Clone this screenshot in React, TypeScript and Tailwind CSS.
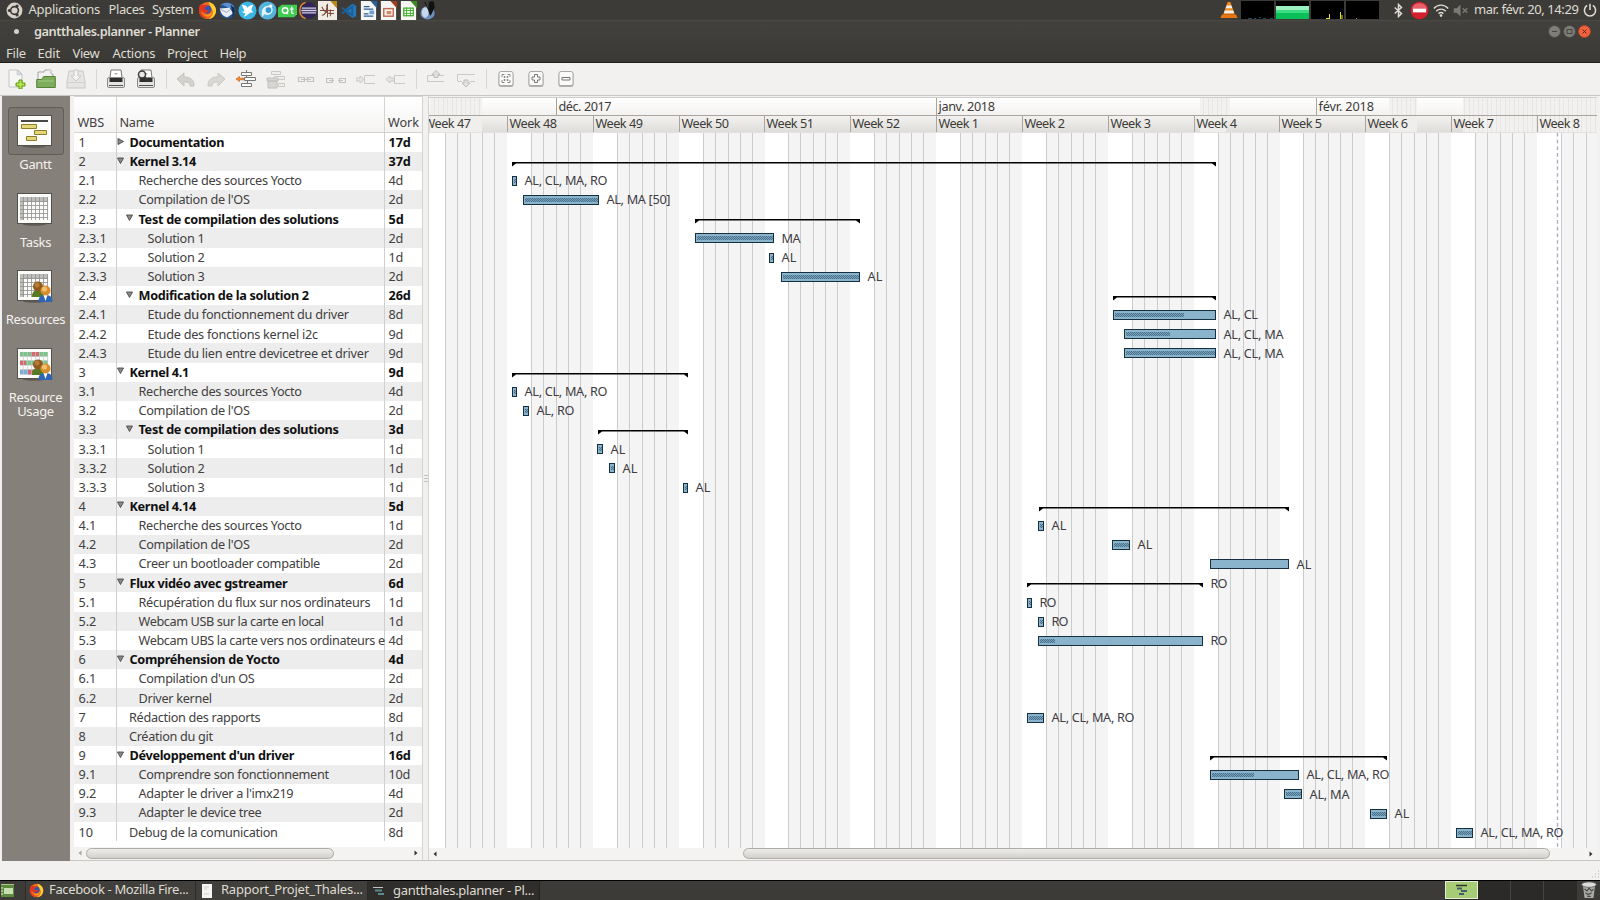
import type { ReactNode } from "react";

type Row = { wbs: string; name: string; work: string; level: number; parent?: "open" | "closed"; tight?: boolean };

const rows: Row[] = [
  { wbs: "1", name: "Documentation", work: "17d", level: 0, parent: "closed" },
  { wbs: "2", name: "Kernel 3.14", work: "37d", level: 0, parent: "open" },
  { wbs: "2.1", name: "Recherche des sources Yocto", work: "4d", level: 1 },
  { wbs: "2.2", name: "Compilation de l'OS", work: "2d", level: 1 },
  { wbs: "2.3", name: "Test de compilation des solutions", work: "5d", level: 1, parent: "open" },
  { wbs: "2.3.1", name: "Solution 1", work: "2d", level: 2 },
  { wbs: "2.3.2", name: "Solution 2", work: "1d", level: 2 },
  { wbs: "2.3.3", name: "Solution 3", work: "2d", level: 2 },
  { wbs: "2.4", name: "Modification de la solution 2", work: "26d", level: 1, parent: "open" },
  { wbs: "2.4.1", name: "Etude du fonctionnement du driver", work: "8d", level: 2 },
  { wbs: "2.4.2", name: "Etude des fonctions kernel i2c", work: "9d", level: 2 },
  { wbs: "2.4.3", name: "Etude du lien entre devicetree et driver", work: "9d", level: 2 },
  { wbs: "3", name: "Kernel 4.1", work: "9d", level: 0, parent: "open" },
  { wbs: "3.1", name: "Recherche des sources Yocto", work: "4d", level: 1 },
  { wbs: "3.2", name: "Compilation de l'OS", work: "2d", level: 1 },
  { wbs: "3.3", name: "Test de compilation des solutions", work: "3d", level: 1, parent: "open" },
  { wbs: "3.3.1", name: "Solution 1", work: "1d", level: 2 },
  { wbs: "3.3.2", name: "Solution 2", work: "1d", level: 2 },
  { wbs: "3.3.3", name: "Solution 3", work: "1d", level: 2 },
  { wbs: "4", name: "Kernel 4.14", work: "5d", level: 0, parent: "open" },
  { wbs: "4.1", name: "Recherche des sources Yocto", work: "1d", level: 1 },
  { wbs: "4.2", name: "Compilation de l'OS", work: "2d", level: 1 },
  { wbs: "4.3", name: "Creer un bootloader compatible", work: "2d", level: 1 },
  { wbs: "5", name: "Flux vidéo avec gstreamer", work: "6d", level: 0, parent: "open" },
  { wbs: "5.1", name: "Récupération du flux sur nos ordinateurs", work: "1d", level: 1 },
  { wbs: "5.2", name: "Webcam USB sur la carte en local", work: "1d", level: 1, tight: true },
  { wbs: "5.3", name: "Webcam UBS la carte vers nos ordinateurs e", work: "4d", level: 1, tight: true },
  { wbs: "6", name: "Compréhension de Yocto", work: "4d", level: 0, parent: "open" },
  { wbs: "6.1", name: "Compilation d'un OS", work: "2d", level: 1 },
  { wbs: "6.2", name: "Driver kernel", work: "2d", level: 1 },
  { wbs: "7", name: "Rédaction des rapports", work: "8d", level: 0 },
  { wbs: "8", name: "Création du git", work: "1d", level: 0 },
  { wbs: "9", name: "Développement d'un driver", work: "16d", level: 0, parent: "open" },
  { wbs: "9.1", name: "Comprendre son fonctionnement", work: "10d", level: 1 },
  { wbs: "9.2", name: "Adapter le driver a l'imx219", work: "4d", level: 1 },
  { wbs: "9.3", name: "Adapter le device tree", work: "2d", level: 1 },
  { wbs: "10", name: "Debug de la comunication", work: "8d", level: 0 },
];

type Bar = { wbs: string; from: number; to: number; done?: number; label?: string; summary?: boolean };

const bars: Bar[] = [
  { wbs: "2", from: 512, to: 1216, summary: true },
  { wbs: "2.1", from: 512, to: 517, label: "AL, CL, MA, RO" },
  { wbs: "2.2", from: 523, to: 599, label: "AL, MA [50]" },
  { wbs: "2.3", from: 695, to: 860, summary: true },
  { wbs: "2.3.1", from: 695, to: 774, label: "MA" },
  { wbs: "2.3.2", from: 769, to: 774, label: "AL" },
  { wbs: "2.3.3", from: 781, to: 860, label: "AL" },
  { wbs: "2.4", from: 1113, to: 1216, summary: true },
  { wbs: "2.4.1", from: 1113, to: 1216, done: 1184, label: "AL, CL" },
  { wbs: "2.4.2", from: 1124, to: 1216, done: 1170, label: "AL, CL, MA" },
  { wbs: "2.4.3", from: 1124, to: 1216, label: "AL, CL, MA" },
  { wbs: "3", from: 512, to: 688, summary: true },
  { wbs: "3.1", from: 512, to: 517, label: "AL, CL, MA, RO" },
  { wbs: "3.2", from: 523, to: 529, label: "AL, RO" },
  { wbs: "3.3", from: 598, to: 688, summary: true },
  { wbs: "3.3.1", from: 597, to: 603, label: "AL" },
  { wbs: "3.3.2", from: 609, to: 615, label: "AL" },
  { wbs: "3.3.3", from: 683, to: 688, label: "AL" },
  { wbs: "4", from: 1039, to: 1289, summary: true },
  { wbs: "4.1", from: 1038, to: 1044, label: "AL" },
  { wbs: "4.2", from: 1112, to: 1130, label: "AL" },
  { wbs: "4.3", from: 1210, to: 1289, done: 1210, label: "AL" },
  { wbs: "5", from: 1027, to: 1203, summary: true, label: "RO" },
  { wbs: "5.1", from: 1027, to: 1032, label: "RO" },
  { wbs: "5.2", from: 1038, to: 1044, label: "RO" },
  { wbs: "5.3", from: 1038, to: 1203, done: 1055, label: "RO" },
  { wbs: "7", from: 1027, to: 1044, label: "AL, CL, MA, RO" },
  { wbs: "9", from: 1210, to: 1387, summary: true },
  { wbs: "9.1", from: 1210, to: 1299, done: 1254, label: "AL, CL, MA, RO" },
  { wbs: "9.2", from: 1284, to: 1302, label: "AL, MA" },
  { wbs: "9.3", from: 1370, to: 1387, label: "AL" },
  { wbs: "10", from: 1456, to: 1473, label: "AL, CL, MA, RO" },
];

const labelWidth: Record<string, number> = {
  "AL, CL, MA, RO": 83,
  "AL, MA [50]": 64,
  MA: 19,
  AL: 15,
  "AL, CL": 34.5,
  "AL, CL, MA": 60,
  "AL, RO": 38,
  RO: 17,
  "AL, MA": 40,
};

const weeks = ["47", "48", "49", "50", "51", "52", "1", "2", "3", "4", "5", "6", "7", "8"];
const months = [
  { x: 556, label: "déc. 2017", w: 53 },
  { x: 936, label: "janv. 2018", w: 56.5 },
  { x: 1316, label: "févr. 2018", w: 55.5 },
];
const WEEK = 85.83;
const ROW = 19.17;
const TOP = 132.7;

const dither = [
  { from: 430, to: 482 },
  { from: 1200, to: 1230 },
  { from: 1389, to: 1417 },
  { from: 1463, to: 1597 },
];

function Chart() {
  return (
    <svg width="1168" height="751" viewBox="429 97 1168 751" className="block" fontFamily="'Noto Sans', sans-serif" fontSize="12.7">
      <defs>
        <linearGradient id="month" x1="0" y1="0" x2="0" y2="1">
          <stop offset="0" stopColor="#fff" />
          <stop offset="1" stopColor="#f3f2f0" />
        </linearGradient>
        <linearGradient id="week" x1="0" y1="0" x2="0" y2="1">
          <stop offset="0" stopColor="#f3f2f0" />
          <stop offset="1" stopColor="#dfddda" />
        </linearGradient>
        <pattern id="stripe" width="9" height="20" patternUnits="userSpaceOnUse">
          <rect width="9" height="20" fill="#f2f1ef" />
          <rect x="2" width="1" height="20" fill="#e6e4e2" />
          <rect x="6" width="1" height="20" fill="#e9e7e5" />
        </pattern>
        <pattern id="done" width="4" height="4" patternUnits="userSpaceOnUse">
          <rect width="4" height="4" fill="#7ba2bb" />
          <path d="M0 0h1v1H0zM2 0h1v1H2zM1 1h1v1H1zM3 1h1v1H3zM0 2h1v1H0zM2 2h1v1H2zM1 3h1v1H1zM3 3h1v1H3z" fill="#48718d" />
        </pattern>
      </defs>
      <rect x="429" y="97" width="1168" height="751" fill="#fff" />
      <rect x="429" y="98" width="1168" height="17" fill="url(#month)" />
      <rect x="429" y="116" width="1168" height="16" fill="url(#week)" />
      {dither.map((d) => (
        <rect key={d.from} x={d.from} y="98" width={d.to - d.from} height="17" fill="url(#stripe)" />
      ))}
      <rect x="430" y="116" width="52" height="16" fill="#f0efed" />
      <rect x="1200" y="116" width="26" height="16" fill="#efeeec" />
      <rect x="1390" y="116" width="27" height="16" fill="#efeeec" />
      <rect x="1463" y="116" width="134" height="16" fill="url(#stripe)" />
      <rect x="429" y="97" width="1168" height="1" fill="#d0cecb" />
      <rect x="429" y="115" width="1168" height="1" fill="#a9a49d" />
      <rect x="429" y="132" width="1168" height="1" fill="#e4e2df" />
      {months.map((m) => (
        <g key={m.label}>
          <rect x={m.x} y="98" width="1" height="17" fill="#a9a49d" />
          <text x={m.x + 2.5} y="111" textLength={m.w} fill="#3c3b37">{m.label}</text>
        </g>
      ))}
      {weeks.map((w, i) => {
        const x = Math.round(507 + (i - 1) * WEEK);
        return (
          <g key={w}>
            {[0, 1, 2, 3, 4].map((d) => {
              const dx = Math.round(x + 24 + d * 12.26);
              return (
                <g key={d}>
                  <rect x={dx} y="133" width="13" height="715" fill="#f4f4f4" />
                  <rect x={dx} y="133" width="1" height="715" fill="#cbcbcb" />
                </g>
              );
            })}
            <rect x={x} y="116" width="1" height="16" fill="#a9a49d" />
            <text x={x + 2.5} y="128.3" textLength={w.length > 1 ? 47.5 : 40.5} fill="#3c3b37">{"Week " + w}</text>
          </g>
        );
      })}
      <path d="M1557.5 133V848" stroke="#aaaaca" strokeWidth="1.4" strokeDasharray="3.6 3.1" />
      {bars.map((b) => {
        const index = rows.findIndex((r) => r.wbs === b.wbs);
        const top = TOP + index * ROW;
        const y = Math.round(top + 4.9);
        const label = b.label ? (
          <text x={b.to + 7.5} y={top + 14.1} textLength={labelWidth[b.label]} fill="#403c43">{b.label}</text>
        ) : null;
        if (b.summary) {
          const s = Math.round(top + 9.8);
          return (
            <g key={b.wbs}>
              <path d={`M${b.from} ${s}H${b.to}V${s + 4.5}L${b.to - 4} ${s + 1.5}H${b.from + 4}L${b.from} ${s + 4.5}Z`} fill="#000" />
              {label}
            </g>
          );
        }
        const done = b.done ?? b.to - 1;
        return (
          <g key={b.wbs}>
            <rect x={b.from + 0.5} y={y + 0.5} width={b.to - b.from - 1} height="9" fill="#8ab3cc" stroke="#17303f" />
            {done > b.from && <rect x={b.from + 2} y={y + 3} width={Math.max(1, done - b.from - 2)} height="4" fill="url(#done)" />}
            {label}
          </g>
        );
      })}
    </svg>
  );
}

function Svg({ children, size = 20 }: { children: ReactNode; size?: number }) {
  return (
    <svg width={size} height={size} viewBox="0 0 20 20" className="shrink-0" fill="none">
      {children}
    </svg>
  );
}

const firefox = (
  <>
    <circle cx="10" cy="10" r="9" fill="#f26a1b" />
    <path d="M11 1c5 1 8 5 8 9s-3 9-8 9c5-3 6-8 3-12-1-2-2-3-3-6z" fill="#ffd02f" />
    <circle cx="9.5" cy="9" r="4.5" fill="#2a56b8" />
    <path d="M1.5 5C3 3 4 3 5 4c2 0 4 0 5 2-2 0-3 1-3 2 1 2 3 2 5 1 0 4-6 5-9 1 0 4 3 7 7 8-5 1-9-3-9-8z" fill="#e0361f" />
    <path d="M5 13c3 3 8 2 10-2 0 5-5 8-10 2z" fill="#ff9a1a" />
  </>
);

function Doc({ color, children }: { color: string; children: ReactNode }) {
  return (
    <>
      <path d="M2 0h11l5 5v15H2z" fill="#f6f6f4" />
      <path d="M12 0h7v8z" fill={color} />
      {children}
    </>
  );
}

const launchers: ReactNode[] = [
  firefox,
  <>
    <circle cx="10" cy="10" r="8.5" fill="#24518f" />
    <path d="M2 5c4-5 12-4 15 1L12 8 5 4z" fill="#5d8fd0" />
    <path d="M2 8l10-1 4 6-6 4c-4 0-7-3-8-9z" fill="#e9edf2" />
    <path d="M3 9l6 3 5-4" stroke="#9aa7b8" />
    <path d="M13 4c5 2 6 9 2 13 1-4 0-8-2-13z" fill="#122c55" />
  </>,
  <>
    <circle cx="10" cy="10" r="9.5" fill="#39b6e6" />
    <path d="M4 4c3 0 5 1 6 3 2-2 4-3 6-3l-2 5 2 3c-2 0-3 0-4 1-2 2-4 3-6 4l2-4c-2 0-3-1-4-2h3z" fill="#fff" />
  </>,
  <>
    <circle cx="10" cy="10" r="9.500" fill="#52b4dd" />
    <path d="M4 12c0-4 3-7 7-7l3-2v3c2 2 2 5 0 7-2 2-5 2-7 1l-3 3z" fill="#dff3fb" />
    <circle cx="11" cy="9.500" r="3" fill="#3598cb" />
    <circle cx="14" cy="5.500" r="1.200" fill="#fff" />
  </>,
  <>
    <path d="M4 4h16v10l-3 3H0V7z" fill="#41cd52" />
    <circle cx="7.500" cy="10" r="2.900" stroke="#fff" strokeWidth="1.500" />
    <path d="M8.500 11.500l2 2M14.500 6v6c0 1 .8 1.300 2 1M12.500 8.500h4" stroke="#fff" strokeWidth="1.400" />
  </>,
  <>
    <circle cx="11" cy="10" r="8.800" fill="#2f2559" />
    <path d="M8 1.500a9 9 0 000 17" stroke="#e58a2a" strokeWidth="1.500" />
    <path d="M4 7.500h15M3.500 10h16M4 12.500h15" stroke="#d7d2e8" strokeWidth="1.400" />
  </>,
  <>
    <path d="M0 0h14l6 6v14H0z" fill="#f1ede6" />
    <path d="M13 0h7v8z" fill="#b98a1a" />
    <path d="M4 15c5 0 6-9 5-11M4 6c3 7 8 8 13 7M2 10h15M10 3v14M13 9v7" stroke="#7d4a3c" strokeWidth="1.100" />
  </>,
  <>
    <path d="M14 3l4 2v11l-4 2-9-8z" fill="#2577b8" />
    <path d="M3 7l11 8V6L3 13" stroke="#1b5f98" strokeWidth="2" />
  </>,
  <Doc color="#2a6099">
    <path d="M5 6h6M5 8.500h10M5 13.500h5M5 16h10" stroke="#2a5f94" strokeWidth="1.300" />
    <rect x="11" y="10" width="5" height="4" fill="#6aa3d3" />
  </Doc>,
  <Doc color="#a33e1e">
    <rect x="5" y="8" width="10" height="8" stroke="#c06a52" strokeWidth="1.500" />
    <rect x="8" y="10.500" width="5" height="3.500" fill="#d98a6c" />
  </Doc>,
  <Doc color="#3d8b20">
    <rect x="5" y="7.500" width="10" height="8" fill="#fff" stroke="#3fae2a" strokeWidth="1.300" />
    <path d="M5 10h10M5 13h10M8 7v9M12 7v9" stroke="#3fae2a" />
  </Doc>,
  <>
    <ellipse cx="9" cy="12.500" rx="7.500" ry="7" fill="#6f8fbd" />
    <ellipse cx="6.500" cy="12" rx="3.500" ry="5.500" fill="#c7d6ea" />
    <path d="M11 1h4l1 6-4 8-2-6zM6 1l4 8" fill="#111" stroke="#111" />
  </>,
];

function TopBar() {
  return (
    <div className="flex h-[21px] shrink-0 items-center border-b border-[#4a4843] bg-[#3c3b37] text-[13px] text-[#dfdbd2]">
      <div className="flex w-[28.500px] justify-center">
        <Svg size={17}>
          <circle cx="10" cy="10" r="9.300" fill="#d8d3c9" />
          <circle cx="10" cy="10" r="4.600" stroke="#3c3b37" strokeWidth="2" />
          <circle cx="4" cy="10" r="1.900" fill="#3c3b37" />
          <circle cx="13" cy="4.800" r="1.900" fill="#3c3b37" />
          <circle cx="13" cy="15.200" r="1.900" fill="#3c3b37" />
        </Svg>
      </div>
      <span className="w-[80px] tracking-[-0.280px]">Applications</span>
      <span className="w-[43.500px] tracking-[-0.400px]">Places</span>
      <span className="w-[45px] tracking-[-0.500px]">System</span>
      <div className="flex">
        {launchers.map((icon, i) => (
          <div key={i} className="flex w-[20.150px] justify-center">
            <Svg size={19}>{icon}</Svg>
          </div>
        ))}
      </div>
      <div className="ml-auto flex items-center">
        <Svg size={18}>
          <path d="M8.500 1h3l5 14h-13z" fill="#f08a1c" />
          <path d="M7.300 5h5.400l1 3H6.300zM5.300 10.500h9.400l1 3H4.300z" fill="#eee" />
          <path d="M2 15h16l1.500 4H.5z" fill="#e87510" />
        </Svg>
        <div className="ml-[3px] flex gap-[2px]">
          <svg width="33" height="18" className="bg-black">
            <path d="M7 17.500h4M13 17.500h2M18 16.500h2M22 17.500h3M29 17.500h3" stroke="#1d4a66" />
          </svg>
          <svg width="33" height="18" className="bg-black">
            <rect y="5" width="33" height="13" fill="#0bbf5b" />
            <rect y="5" width="33" height="4" fill="#9df0bf" />
            <rect y="9" width="33" height="3" fill="#3cdc83" />
          </svg>
          <svg width="33" height="18" className="bg-black">
            <path d="M18.500 18v-5M15 17.500h4M29.500 18v-7M31 18v-4" stroke="#e0e020" />
          </svg>
          <svg width="33" height="18" className="bg-black">
            <path d="M10.500 18v-1" stroke="#888" />
          </svg>
        </div>
        <div className="ml-[12px] flex w-[14px] justify-center">
          <Svg size={15}>
            <path d="M5 6l9 8-4 4V2l4 4-9 8" stroke="#dfdbd2" strokeWidth="2" />
          </Svg>
        </div>
        <div className="ml-[5px]">
          <Svg size={19}>
            <circle cx="10" cy="10" r="9.300" fill="#d3202c" />
            <path d="M2 8a8.500 8.500 0 0116 0z" fill="#e8606a" />
            <rect x="3" y="8" width="14" height="4" fill="#fff" />
          </Svg>
        </div>
        <div className="ml-[4px]">
          <Svg size={16}>
            <path d="M1 8c5-5.500 13-5.500 18 0M4 11.500c3.500-3.500 8.500-3.500 12 0M7 14.500c2-1.800 4-1.800 6 0" stroke="#dfdbd2" strokeWidth="1.800" />
            <circle cx="10" cy="17" r="1.600" fill="#dfdbd2" />
          </Svg>
        </div>
        <div className="ml-[4px]">
          <Svg size={15}>
            <path d="M1 7h4l5-5v16l-5-5H1z" fill="#7c7a74" />
            <path d="M13 7l6 6M19 7l-6 6" stroke="#7c7a74" strokeWidth="1.800" />
          </Svg>
        </div>
        <span className="ml-[6px] w-[109px] whitespace-nowrap tracking-[-0.420px]">mar. févr. 20, 14:29</span>
        <div className="mr-[3px]">
          <Svg size={14}>
            <path d="M6 3.500a8 8 0 108 0M10 1v9" stroke="#dfdbd2" strokeWidth="2.200" />
          </Svg>
        </div>
      </div>
    </div>
  );
}

function TitleAndMenu() {
  return (
    <div className="h-[42px] shrink-0 border-b border-[#1f1e1b] bg-gradient-to-b from-[#42413d] to-[#3a3935] text-[13px] text-[#dfdbd2]">
      <div className="flex h-[21px] items-center pr-[9px]">
        <div className="ml-[14px] size-[5px] rounded-full bg-[#d5d1c8]" />
        <span className="ml-[15px] text-[12.800px] font-semibold tracking-[-0.450px]">gantthales.planner - Planner</span>
        <div className="ml-auto flex gap-[2px]">
          <svg width="13" height="13" viewBox="0 0 13 13">
            <circle cx="6.500" cy="6.500" r="6" fill="#7f7d77" stroke="#4b4a46" />
            <path d="M4 6.500h5" stroke="#45443f" />
          </svg>
          <svg width="13" height="13" viewBox="0 0 13 13">
            <circle cx="6.500" cy="6.500" r="6" fill="#7f7d77" stroke="#4b4a46" />
            <rect x="4" y="4.500" width="5" height="4" fill="none" stroke="#45443f" />
          </svg>
          <svg width="13" height="13" viewBox="0 0 13 13">
            <circle cx="6.500" cy="6.500" r="6" fill="#ee6440" stroke="#b5401f" />
            <path d="M4.500 4.500l4 4M8.500 4.500l-4 4" stroke="#6b2410" />
          </svg>
        </div>
      </div>
      <div className="flex h-[21px] items-center pt-[2px] pl-[6px] leading-none">
        <span className="w-[31.500px] tracking-[-0.200px]">File</span>
        <span className="w-[35px] tracking-[-0.200px]">Edit</span>
        <span className="w-[40px] tracking-[-0.400px]">View</span>
        <span className="w-[54.500px] tracking-[-0.300px]">Actions</span>
        <span className="w-[52.500px] tracking-[-0.300px]">Project</span>
        <span className="tracking-[-0.400px]">Help</span>
      </div>
    </div>
  );
}

function Printer({ preview = false }: { preview?: boolean }) {
  return (
    <>
      <path d="M4 9l1-8h10l1 8z" fill="#fff" stroke="#777" />
      <rect x="1.500" y="8.500" width="17" height="10" rx="1.500" fill="#e4e4e2" stroke="#8a8a88" />
      <path d="M3.500 9h13v4h-13z" fill="#2e2e2e" />
      <path d="M3 16.500h14" stroke="#555" />
      <path d="M8 4h4l-2 2z" fill="#aaa" />
      {preview && (
        <>
          <circle cx="6" cy="5.500" r="3.500" fill="#e8e8e8" stroke="#3a3a3a" strokeWidth="1.500" />
          <path d="M8.500 8l4 4" stroke="#3a3a3a" strokeWidth="2" />
        </>
      )}
    </>
  );
}

function ZoomFrame({ children }: { children: ReactNode }) {
  return (
    <>
      <rect x="2.500" y="3.500" width="15" height="14.500" rx="2.500" fill="#b0afac" />
      <rect x="3" y="2.500" width="14" height="14" rx="2" fill="#fbfbfa" stroke="#aaa9a6" />
      {children}
    </>
  );
}

const ghost = "#cbc9c6";
const tools: ReactNode[][] = [
  [
    <>
      <path d="M3 1h9l4 4v13H3z" fill="#f6f6f5" stroke="#c6c5c2" />
      <path d="M11 1v5h5z" fill="#d6d6e4" stroke="#c0c0cc" strokeWidth=".5" />
      <path d="M13 11h3v3h3v3h-3v3h-3v-3h-3v-3h3z" fill="#b7e34a" stroke="#5d9a16" />
    </>,
    <>
      <path d="M2 17V3h6l1-2h6v4h2v12z" fill="#f2f2f1" stroke="#a5a4a1" />
      <path d="M11 1h4v4h2" fill="#dcdce8" />
      <path d="M.7 18.500v-8h5l2-3h11.600v11z" fill="#7cac5c" stroke="#558236" />
      <path d="M2 12h16" stroke="#a5ca8a" />
    </>,
    <>
      <path d="M3 2h14l2 11v6H1v-6z" fill="#e6e5e3" stroke={ghost} />
      <path d="M2 13.500h16" stroke="#d2d0cd" />
      <path d="M8 1h4v6h3l-5 5-5-5h3z" fill="#f4f3f2" stroke={ghost} />
    </>,
  ],
  [<Printer />, <Printer preview />],
  [
    <path d="M1 10l7-6v4c7 0 10 3 10 9h-4c0-3-2-4-6-4v4z" fill="#d4d2cf" stroke="#c6c4c1" />,
    <path d="M19 10l-7-6v4C5 8 2 11 2 17h4c0-3 2-4 6-4v4z" fill="#dad8d5" stroke="#cccac7" />,
    <>
      <path d="M5.500 3.500h10v3h-10zM8.500 8.500h11v3h-11zM5.500 14.500h10v3h-10z" fill="#fff" stroke="#777" />
      <path d="M10.500 1v2M10.500 7v1M11.500 12v2" stroke="#777" />
      <path d="M0 10l3.500-2.500v1.700H8v1.600H3.500v1.700z" fill="#f08a35" stroke="#c25d12" strokeWidth=".6" />
    </>,
    <>
      <path d="M5.500 2.500h9v3h-9zM8.500 7.500h10v3h-10zM12.500 14.500h6v3h-6z" fill="#eee" stroke={ghost} />
      <path d="M1 9h11v3H1zM2 12h9v7H2z" fill="#d7d5d2" stroke="#c2c0bd" />
    </>,
    <path d="M2.500 8.500h6v4h-6zM11.500 8.500h6v4h-6zM5 10.500h10" stroke="#c4c2bf" strokeWidth="1.200" />,
    <path d="M.5 9.500h6v4h-6zM13.500 9.500h6v4h-6zM3 11.500h5M12 11.500h5" stroke="#c4c2bf" strokeWidth="1.200" />,
    <>
      <path d="M19 6.500H8.500v8H19" stroke={ghost} />
      <path d="M8 10.500L4 7v2H0v3h4v2z" fill="#e6e5e3" stroke={ghost} />
    </>,
    <>
      <path d="M19 6.500H8.500v8H19" stroke={ghost} />
      <path d="M0 10.500L4 7v2h4v3H4v2z" fill="#e6e5e3" stroke={ghost} />
    </>,
  ],
  [
    <>
      <path d="M1.500 13V6.500H8M12 6.500h6M1.500 12.500H18" stroke={ghost} />
      <path d="M10 1.500l4 4h-2v3H8v-3H6z" fill="#e2e0de" stroke="#bfbdba" />
    </>,
    <>
      <path d="M1.500 12V5.500H19M1.500 12.500H6M14 12.500h5" stroke={ghost} />
      <path d="M10 18l4-4h-2v-3H8v3H6z" fill="#e2e0de" stroke="#bfbdba" />
    </>,
  ],
  [
    <ZoomFrame>
      <path d="M6 8V5.500h2.500M11.500 5.500H14V8M14 11v2.500h-2.500M8.500 13.500H6V11M8 7.500h1v1H8zM11 7.500h1v1h-1zM8 10.500h1v1H8zM11 10.500h1v1h-1z" stroke="#8a8a88" />
    </ZoomFrame>,
    <ZoomFrame>
      <path d="M8.500 5.500h3v2.500h2.500v3h-2.500v2.500h-3V11H6V8h2.500z" stroke="#777" />
    </ZoomFrame>,
    <ZoomFrame>
      <path d="M6 8.500h8v2.500H6z" stroke="#777" />
    </ZoomFrame>,
  ],
];

function Toolbar() {
  return (
    <div className="flex h-[32px] shrink-0 items-center bg-[#f2f1f0] pb-[1px] pl-[1px]">
      {tools.map((group, g) => (
        <div key={g} className="flex items-center">
          {g > 0 && <div className="mx-[4.500px] h-[20px] w-px bg-[#d9d7d4]" />}
          {group.map((icon, i) => (
            <div key={i} className="flex w-[30px] justify-center">
              <Svg>{icon}</Svg>
            </div>
          ))}
        </div>
      ))}
    </div>
  );
}

function People() {
  return (
    <>
      <path d="M15 27c0-5 2-7 6-7s6 2 6 7z" fill="#587a22" />
      <circle cx="21" cy="16.500" r="5" fill="#8f5a20" />
      <circle cx="20" cy="15" r="2.500" fill="#b57a36" />
      <path d="M21.500 32c0-5 2-7 7-7s7 2 7 7z" fill="#2f66b4" />
      <path d="M26.500 25h4l-2 6z" fill="#fff" />
      <circle cx="28.500" cy="20.500" r="5" fill="#d68d2c" />
      <circle cx="27.500" cy="19" r="2.600" fill="#f3bf6a" />
    </>
  );
}

function Sheet({ children }: { children?: ReactNode }) {
  return (
    <svg width="37" height="34" viewBox="0 0 37 34">
      <ellipse cx="17.500" cy="31" rx="12" ry="1.800" fill="#5f5a54" />
      <rect x=".5" y=".5" width="34" height="30" fill="#fbfbfa" stroke="#55514b" />
      {children}
    </svg>
  );
}

function Grid({ tint = false }: { tint?: boolean }) {
  return (
    <>
      {tint ? (
        <>
          <rect x="3" y="4" width="28" height="4.500" fill="#7cc48b" />
          <rect x="14" y="4" width="8" height="4.500" fill="#d66a72" />
          <rect x="3" y="12.500" width="28" height="4.500" fill="#7cc48b" />
          <rect x="3" y="12.500" width="6" height="4.500" fill="#d66a72" />
          <rect x="3" y="21.500" width="18" height="5" fill="#7fb0d2" />
          <rect x="11" y="21.500" width="8" height="5" fill="#d66a72" />
          <path
            d="M3 8.500h28M3 12.500h28M3 17.500h28M3 21.500h28M6.500 4v23M10.500 4v23M14.500 4v23M18.500 4v23M22.500 4v23M26.500 4v23M30.500 4v23"
            stroke="#c4c8c4"
            strokeWidth=".6"
          />
        </>
      ) : (
        <>
          <rect x="3" y="4" width="28" height="5" fill="#bdbdbb" />
          <rect x="3" y="4" width="4" height="23" fill="#bdbdbb" />
          <path
            d="M3 8.500h28M3 12.500h28M3 16.500h28M3 20.500h28M3 24.500h28M6.500 4v23M10.500 4v23M14.500 4v23M18.500 4v23M22.500 4v23M26.500 4v23M30.500 4v23"
            stroke="#8f8f8d"
            strokeWidth=".8"
          />
        </>
      )}
    </>
  );
}

function SideItem({ label, active = false, children }: { label: string; active?: boolean; children: ReactNode }) {
  return (
    <div className="flex h-[77.700px] flex-col items-center">
      <div
        className={
          active
            ? "flex h-[48px] w-[56px] items-center justify-center rounded-[3px] border border-[#615d57] bg-[#7b766f] pt-[2px]"
            : "flex h-[48px] w-[56px] items-center justify-center pt-[2px]"
        }
      >
        {children}
      </div>
      <span className="mt-[2px] w-[66px] text-center text-[13px] leading-[14px] tracking-[-0.350px] text-[#f4f2ee]">{label}</span>
    </div>
  );
}

function Sidebar() {
  return (
    <div className="ml-[2px] w-[68px] shrink-0 bg-[#86807a] pt-[11px] pr-px">
      <SideItem label="Gantt" active>
        <Sheet>
          <path d="M4 6h27" stroke="#333" strokeWidth="1.800" />
          <path d="M4.500 9.500h15v4h-15zM17.500 15.500h12v4h-12zM9.500 21.500h10v4h-10z" fill="#e3d677" stroke="#8b7d2c" />
        </Sheet>
      </SideItem>
      <SideItem label="Tasks">
        <Sheet>
          <Grid />
        </Sheet>
      </SideItem>
      <SideItem label="Resources">
        <Sheet>
          <Grid />
          <People />
        </Sheet>
      </SideItem>
      <SideItem label="Resource Usage">
        <Sheet>
          <Grid tint />
          <People />
        </Sheet>
      </SideItem>
    </div>
  );
}

function Expander({ open }: { open: boolean }) {
  return (
    <svg width="7" height="7" viewBox="0 0 7 7" className="-mt-[3px] mr-[6px] shrink-0">
      <path d={open ? "M.5 1h6L3.500 6.500z" : "M1 .5v6L6.500 3.500z"} fill="#8a8a88" stroke="#4a4a48" strokeWidth=".9" />
    </svg>
  );
}

function Arrow({ left = false, dim = false }: { left?: boolean; dim?: boolean }) {
  return (
    <svg width="12" height="10" viewBox="0 0 12 10" className="shrink-0">
      <path d={left ? "M7.500 2.500v5L4.500 5z" : "M4.500 2.500v5L7.500 5z"} fill={dim ? "#aaa8a4" : "#333"} />
    </svg>
  );
}

function nameClass(r: Row) {
  if (r.parent) {
    return r.level === 0
      ? "-ml-[0.500px] font-bold text-[#101010] tracking-[-0.320px]"
      : "pl-[8.500px] font-bold text-[#101010] tracking-[-0.310px]";
  }
  if (r.tight) return "pl-[21.500px] tracking-[-0.400px]";
  if (r.level === 0) return "pl-[12px] tracking-[-0.320px]";
  return r.level === 1 ? "pl-[21.500px] tracking-[-0.310px]" : "pl-[30.500px] tracking-[-0.260px]";
}

function TaskTable() {
  return (
    <div className="flex w-[348px] shrink-0 flex-col bg-white text-[12.700px] text-[#424040]">
      <div className="flex h-[36.700px] shrink-0 items-end border-t border-b border-[#d5d3d0] bg-gradient-to-b from-white to-[#f4f3f2]">
        <div className="flex h-full w-[43px] items-end border-r border-[#d5d3d0] pl-[3.500px] tracking-[-0.200px]">WBS</div>
        <div className="flex h-full w-[268px] items-end border-r border-[#d5d3d0] pl-[2.500px] tracking-[-0.300px]">Name</div>
        <div className="flex h-full items-end pl-[3px] tracking-[-0.100px]">Work</div>
      </div>
      <div className="flex flex-col">
        {rows.map((r, i) => (
          <div key={r.wbs} className={i % 2 ? "flex h-[19.170px] bg-[#ededed]" : "flex h-[19.170px] bg-white"}>
            <div className="flex w-[43px] shrink-0 items-center border-r border-[#cfcfcf] pt-[0.500px] pl-[4.500px] tracking-[-0.100px]">{r.wbs}</div>
            <div className="flex w-[268px] shrink-0 items-center border-r border-[#cfcfcf] pt-[0.500px] whitespace-nowrap">
              <div className={"flex items-center " + nameClass(r)}>
                {r.parent && <Expander open={r.parent === "open"} />}
                {r.name}
              </div>
            </div>
            <div
              className={
                r.parent
                  ? "flex items-center pt-[0.500px] pl-[3.500px] font-bold text-[#101010] tracking-[-0.100px]"
                  : "flex items-center pt-[0.500px] pl-[3.500px] tracking-[-0.200px]"
              }
            >
              {r.work}
            </div>
          </div>
        ))}
      </div>
      <div className="mt-auto flex h-[13px] items-center bg-[#f4f3f2] pb-[1px]">
        <Arrow left dim />
        <div className="flex-1">
          <div className="h-[11px] w-[248px] rounded-full border border-[#aeaaa5] bg-gradient-to-b from-[#efeeec] to-[#d3d0cc]" />
        </div>
        <Arrow />
      </div>
    </div>
  );
}

function Taskbar() {
  return (
    <div className="flex h-[20px] shrink-0 items-center border-t border-black bg-[#3c3b37] text-[13px] text-[#dfdbd2]">
      <div className="flex w-[25px] pl-[1px]">
        <svg width="13" height="13" viewBox="0 0 13 13">
          <rect width="13" height="13" fill="#5d8a3d" />
          <path d="M0 .5h13" stroke="#a9c98c" />
          <rect x="3" y="4" width="9" height="6" fill="#c8dfb2" />
          <path d="M1 3v8" stroke="#e8f2dd" strokeDasharray="2 1" />
        </svg>
      </div>
      <div className="flex h-full w-[171px] items-center border-x border-[#2c2b28] bg-[#403f3b] pl-[3px]">
        <Svg size={15}>{firefox}</Svg>
        <span className="-mt-px ml-[5px] whitespace-nowrap tracking-[-0.350px]">Facebook - Mozilla Fire...</span>
      </div>
      <div className="flex h-full w-[172px] items-center border-r border-[#2c2b28] bg-[#403f3b] pl-[6px]">
        <svg width="10" height="14" viewBox="0 0 10 14">
          <path d="M0 0h10v14H0z" fill="#f4f4f2" />
          <path d="M2 3h5M2 5h3M2 10h5" stroke="#ccc" />
        </svg>
        <span className="-mt-px ml-[9px] whitespace-nowrap tracking-[-0.220px]">Rapport_Projet_Thales...</span>
      </div>
      <div className="flex h-full w-[172px] items-center border-r border-[#242320] bg-[#2f2e2b] pl-[5px]">
        <svg width="12" height="10" viewBox="0 0 12 10">
          <path d="M0 1.500h10" stroke="#bfc5c5" />
          <path d="M2 4.500h7M5 8h6" stroke="#5c8a93" strokeWidth="2" />
        </svg>
        <span className="ml-[8px] whitespace-nowrap tracking-[-0.280px]">gantthales.planner - Pl...</span>
      </div>
      <div className="ml-auto flex h-full bg-[#2b2a28]">
        <div className="flex h-[18px] w-[33px] items-center justify-center border border-[#e4ecd8] bg-[#a6cc76]">
          <svg width="12" height="12" viewBox="0 0 12 12">
            <path d="M0 1.500h11" stroke="#333" strokeWidth="1.500" />
            <path d="M1 4.500h5M5 7h6M3 10h5" stroke="#41606a" strokeWidth="2.200" />
          </svg>
        </div>
        <div className="w-[33px] border-r border-[#454440]" />
        <div className="w-[33px] border-r border-[#454440]" />
        <div className="w-[34px] border-r border-[#3c3b37]" />
        <div className="flex w-[22px] justify-center bg-[#3c3b37]">
          <Svg size={18}>
            <path d="M3 3h14l-2 16H5z" fill="#a9a9a6" />
            <ellipse cx="10" cy="4" rx="8" ry="3" fill="#dcdcda" stroke="#6a6a68" />
            <path d="M5 9l3 2 2-3 3 3 2-2M6 13l3 2 4-2M8 17h4" stroke="#4a4a48" strokeWidth="1.300" />
          </Svg>
        </div>
      </div>
    </div>
  );
}

export default function App() {
  return (
    <div className="flex h-[900px] w-[1600px] flex-col overflow-hidden bg-[#f2f1f0] font-['Noto_Sans',sans-serif]">
      <TopBar />
      <TitleAndMenu />
      <Toolbar />
      <div className="flex h-[767px] shrink-0 border-t border-[#c9c7c3] pb-px">
        <Sidebar />
        <div className="flex flex-1 border-b border-[#c9c7c3] pl-[4px]">
          <TaskTable />
          <div className="flex w-[7px] shrink-0 flex-col items-center justify-center gap-[2px] border-x border-[#d5d3d0]">
            <div className="h-px w-[4px] bg-[#c4c2be]" />
            <div className="h-px w-[4px] bg-[#c4c2be]" />
            <div className="h-px w-[4px] bg-[#c4c2be]" />
          </div>
          <div className="flex w-[1168px] flex-col">
            <div className="pt-[1px]">
              <Chart />
            </div>
            <div className="mt-auto flex h-[12px] items-center bg-[#f4f3f2] pb-[1px]">
              <Arrow left />
              <div className="flex flex-1 pl-[302px]">
                <div className="h-[11px] w-[807px] rounded-full border border-[#aeaaa5] bg-gradient-to-b from-[#efeeec] to-[#d3d0cc]" />
              </div>
              <Arrow />
            </div>
          </div>
        </div>
      </div>
      <div className="flex flex-1 items-end justify-end bg-[#f2f1f0]">
        <svg width="10" height="10" viewBox="0 0 10 10">
          <path d="M8 1h1M5 4h1M8 4h1M2 7h1M5 7h1M8 7h1" stroke="#b5b3af" strokeWidth="1" />
        </svg>
      </div>
      <Taskbar />
    </div>
  );
}
